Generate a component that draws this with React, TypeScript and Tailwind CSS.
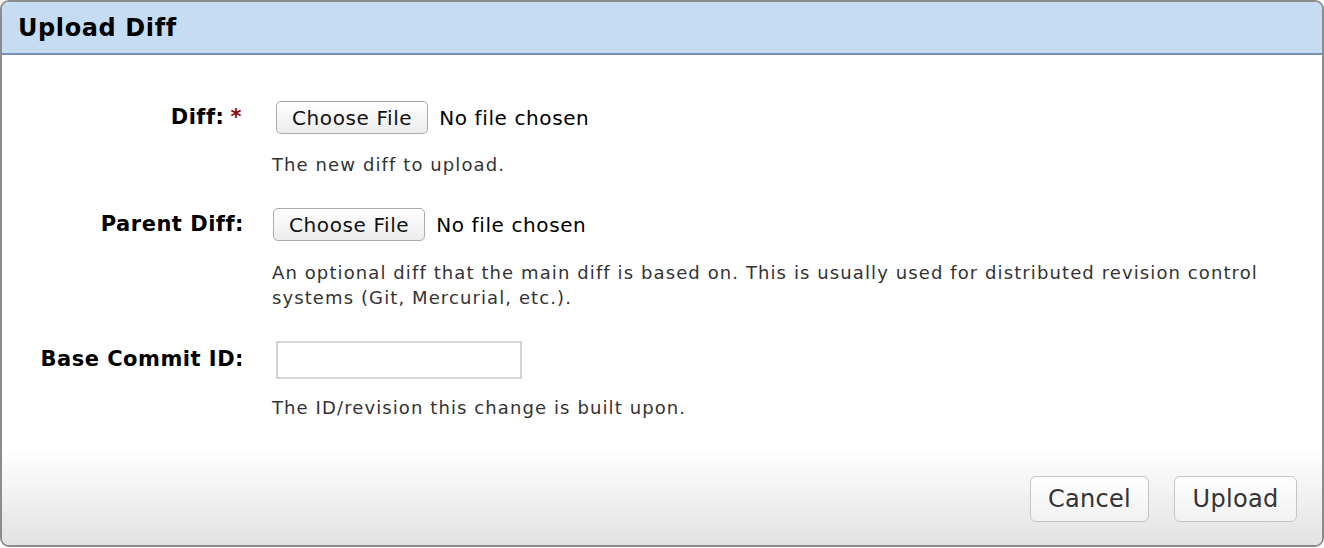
import React from 'react';

const font = { fontFamily: '"DejaVu Sans", Verdana, sans-serif' };

function FileField({ shift }: { shift?: boolean }) {
  return (
    <div className={`flex items-center gap-[11px] ${shift ? 'ml-[4px]' : 'ml-[1px]'}`}>
      <button
        type="button"
        className="h-[33px] rounded-[5px] border border-[#a9a9a9] bg-gradient-to-b from-white to-[#ececec] px-[15px] text-[20px] leading-none tracking-[0.6px] text-[#111]"
      >
        Choose File
      </button>
      <span className="text-[20px] leading-none tracking-[0.6px] text-black">No file chosen</span>
    </div>
  );
}

function Help({ children }: { children: React.ReactNode }) {
  return (
    <p className="max-w-[1000px] text-[18px] leading-[25px] tracking-[1.1px] text-[#333]">{children}</p>
  );
}

export default function App() {
  return (
    <div className="bg-white" style={font}>
      <div className="flex h-[547px] w-[1324px] flex-col overflow-hidden rounded-[9px] border-2 border-[#8c8c8c]">
        <div className="flex h-[53px] shrink-0 items-center border-b-2 border-[#7791b4] bg-[#c6dcf3] px-[16px]">
          <h1 className="text-[24px] font-bold tracking-[0.6px] text-black">Upload Diff</h1>
        </div>

        <div className="grid flex-1 grid-cols-[242px_1fr] content-start gap-x-[28px] pt-[46px]">
          <div className="flex h-[33px] items-center justify-end text-[21px] font-bold tracking-[0.5px] text-black">
            Diff:<span className="ml-[6px] mr-[2px] text-[#9b0a0a]">*</span>
          </div>
          <FileField shift />
          <div />
          <div className="mb-[31px] mt-[18px]">
            <Help>The new diff to upload.</Help>
          </div>

          <div className="flex h-[33px] items-center justify-end text-[21px] font-bold tracking-[0.5px] text-black">
            Parent Diff:
          </div>
          <FileField />
          <div />
          <div className="mb-[31px] mt-[19px]">
            <Help>
              An optional diff that the main diff is based on. This is usually used for distributed revision control
              systems (Git, Mercurial, etc.).
            </Help>
          </div>

          <div className="flex h-[38px] items-center justify-end text-[21px] font-bold tracking-[0.5px] text-black">
            Base Commit ID:
          </div>
          <div className="ml-[4px]">
            <input
              type="text"
              className="h-[38px] w-[246px] border-2 border-[#d4d4d4] bg-white px-2 text-[17px] outline-none"
            />
          </div>
          <div />
          <div className="mt-[16px]">
            <Help>The ID/revision this change is built upon.</Help>
          </div>
        </div>

        <div className="flex h-[96px] shrink-0 items-start justify-end gap-[25px] bg-gradient-to-b from-white to-[#e2e2e2] pr-[25px] pt-[27px]">
          <button
            type="button"
            className="h-[46px] w-[119px] rounded-[6px] border border-[#c4c4c4] bg-gradient-to-b from-white to-[#f1f1f1] text-[24px] tracking-[0.3px] text-[#333]"
          >
            Cancel
          </button>
          <button
            type="button"
            className="h-[46px] w-[123px] rounded-[6px] border border-[#c4c4c4] bg-gradient-to-b from-white to-[#f1f1f1] text-[24px] tracking-[0.3px] text-[#333]"
          >
            Upload
          </button>
        </div>
      </div>
    </div>
  );
}
